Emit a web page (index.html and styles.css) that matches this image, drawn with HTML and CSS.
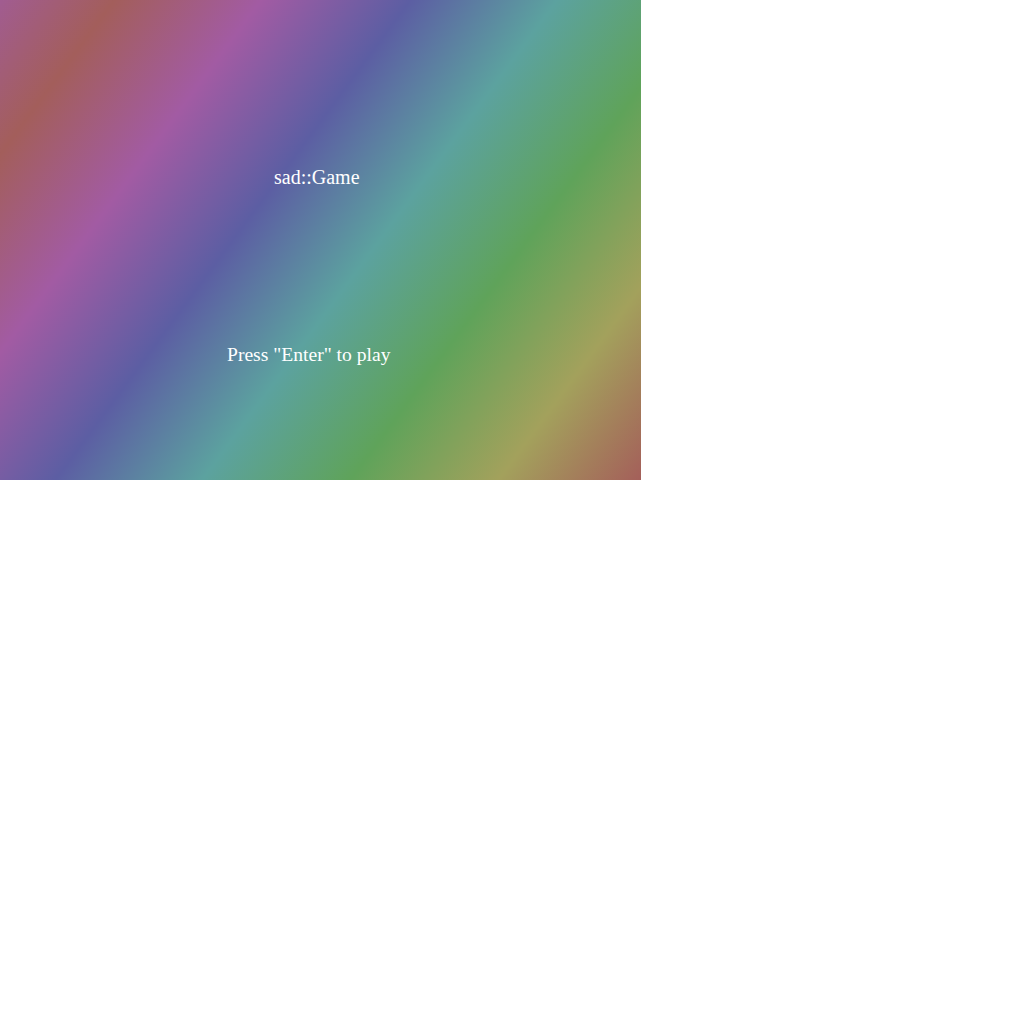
FILE: index.html
```html
<!DOCTYPE html>
<html>
<head>
<meta charset="utf-8">
<link rel="stylesheet" href="styles.css">
</head>
<body>
<div class="screen">
  <div class="title">sad::Game</div>
  <div class="prompt">Press "Enter" to play</div>
</div>
</body>
</html>
```
FILE: styles.css
```css
html, body {
  margin: 0;
  padding: 0;
  background: #ffffff;
}
.screen {
  width: 641px;
  height: 480px;
  box-sizing: border-box;
  padding-top: 165px;
  display: flex;
  flex-direction: column;
  align-items: flex-start;
  background: linear-gradient(126.5deg,
    rgb(161, 92, 145) 0px,
    rgb(163, 94, 91) 92px,
    rgb(162, 91, 163) 210px,
    rgb(92, 94, 163) 330px,
    rgb(92, 162, 159) 448px,
    rgb(95, 163, 90) 567px,
    rgb(163, 161, 92) 686px,
    rgb(164, 95, 90) 801px);
  font-family: "Liberation Serif", serif;
  color: #ffffff;
  font-size: 20px;
  line-height: 24px;
}
.title {
  margin-left: 274px;
}
.prompt {
  margin-left: 227px;
  margin-top: 154px;
  font-size: 19.6px;
}
```
